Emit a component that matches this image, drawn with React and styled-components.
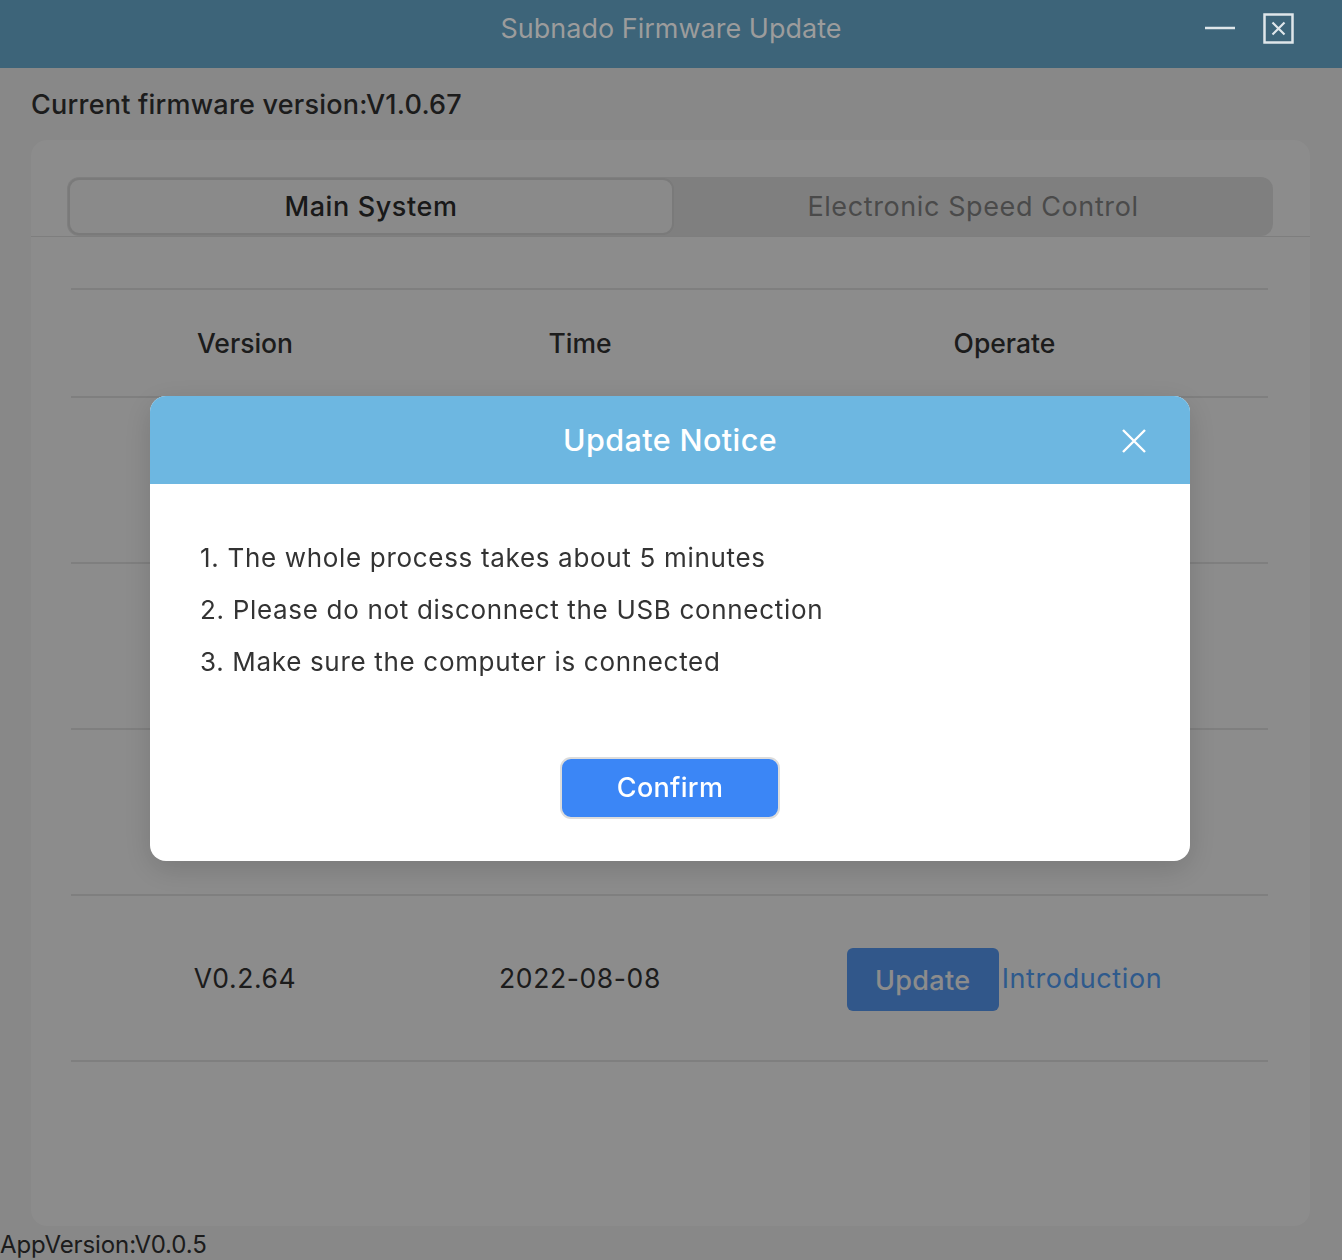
import React from "react";
import styled, { createGlobalStyle } from "styled-components";

const GlobalStyle = createGlobalStyle`
  html, body { margin: 0; padding: 0; }
  body {
    font-family: Inter, "Noto Sans", "Liberation Sans", sans-serif;
    background: #f7f7f7;
    color: #333;
  }
  * { box-sizing: border-box; }
`;

const Window = styled.div`
  width: 1342px;
  height: 1260px;
  background: #f7f7f7;
  display: flex;
  flex-direction: column;
  overflow: hidden;
`;

const TitleBar = styled.div`
  position: relative;
  z-index: 20;
  height: 68px;
  flex: none;
  background: #3d6479;
  display: flex;
  align-items: center;
  justify-content: center;
  padding-bottom: 12px;
`;

const TitleText = styled.div`
  font-size: 27px;
  color: #9c9c9c;
  letter-spacing: 0;
`;

const WinControls = styled.div`
  position: absolute;
  right: 48px;
  top: 13px;
  display: flex;
  align-items: center;
  gap: 28px;
`;

const Heading = styled.div`
  height: 72px;
  padding-left: 31px;
  display: flex;
  align-items: center;
  font-size: 27px;
  font-weight: 500;
  color: #333;
  letter-spacing: 0.22px;
`;

const Card = styled.div`
  margin: 0 32px 0 31px;
  height: 1086px;
  background: #fff;
  border-radius: 16px;
  display: flex;
  flex-direction: column;
`;

const TabHeader = styled.div`
  padding: 37px 37px 0 36px;
  border-bottom: 1px solid #e6e6e6;
`;

const TabList = styled.div`
  height: 59px;
  background: #e8e8e8;
  border-radius: 12px;
  display: flex;
  padding: 1px;
`;

const Tab = styled.div`
  flex: ${(p) => (p.$active ? "none" : "1")};
  width: ${(p) => (p.$active ? "606px" : "auto")};
  display: flex;
  align-items: center;
  justify-content: center;
  font-size: 27px;
  font-weight: ${(p) => (p.$active ? 500 : 400)};
  color: ${(p) => (p.$active ? "#2e2e2e" : "#888")};
  background: ${(p) => (p.$active ? "#fbfbfb" : "transparent")};
  border: 2px solid ${(p) => (p.$active ? "#dedede" : "transparent")};
  border-radius: 11px;
  letter-spacing: 0.6px;
`;

const Table = styled.div`
  margin: 51px 42px 0 40px;
  border-top: 2px solid #e8e8e8;
`;

const Row = styled.div`
  display: grid;
  grid-template-columns: 348px 322px 1fr;
  height: ${(p) => (p.$head ? 108 : 166)}px;
  border-bottom: 2px solid #e8e8e8;
  align-items: center;
`;

const Cell = styled.div`
  display: flex;
  justify-content: center;
  align-items: center;
  font-size: 26.5px;
  font-weight: ${(p) => (p.$head ? 500 : 400)};
  color: #333;
  letter-spacing: ${(p) => (p.$head ? "0" : "0.6px")};
`;

const UpdateButton = styled.button`
  width: 152px;
  height: 63px;
  margin-top: 3px;
  border: none;
  border-radius: 6px;
  background: #5a9efb;
  color: #fff;
  font-family: inherit;
  font-size: 27px;
  font-weight: 500;
  padding-top: 3px;
  letter-spacing: 0.3px;
`;

const IntroLink = styled.span`
  margin-left: 3px;
  color: #55a4ff;
  font-size: 27px;
`;

const Footer = styled.div`
  height: 34px;
  display: flex;
  align-items: flex-end;
  font-size: 24px;
  color: #333;
  letter-spacing: -0.1px;
  line-height: 30px;
`;

const Overlay = styled.div`
  position: fixed;
  inset: 0;
  z-index: 10;
  background: rgba(0, 0, 0, 0.45);
  display: flex;
  align-items: center;
  justify-content: center;
  padding: 0 2px 4px 0;
`;

const Modal = styled.div`
  width: 1040px;
  background: #fff;
  border-radius: 16px;
  overflow: hidden;
  box-shadow: 0 8px 30px rgba(0, 0, 0, 0.15);
`;

const ModalHeader = styled.div`
  position: relative;
  height: 88px;
  background: #6db7e1;
  display: flex;
  align-items: center;
  justify-content: center;
`;

const ModalTitle = styled.div`
  color: #fff;
  font-size: 30.5px;
  font-weight: 500;
  letter-spacing: 0.4px;
`;

const CloseButton = styled.div`
  position: absolute;
  right: 44px;
  top: 33px;
  width: 24px;
  height: 24px;
  display: flex;
`;

const ModalBody = styled.div`
  padding: 48px 50px 42px;
`;

const Notice = styled.div`
  font-size: 26px;
  line-height: 52px;
  color: #333;
  letter-spacing: 0.68px;
`;

const Actions = styled.div`
  margin-top: 69px;
  display: flex;
  justify-content: center;
`;

const ConfirmButton = styled.button`
  width: 220px;
  height: 62px;
  border: 2px solid #dcdcdc;
  border-radius: 11px;
  background: #3b86f6;
  color: #fff;
  font-family: inherit;
  font-size: 27px;
  font-weight: 500;
  letter-spacing: 0.3px;
`;

// Rows hidden behind the modal carry no visible content in the screenshot.
const rows = [
  { id: 1, hidden: true },
  { id: 2, hidden: true },
  { id: 3, hidden: true },
  { id: 4, v: "V0.2.64", t: "2022-08-08" },
];

export default function App() {
  return (
    <>
      <GlobalStyle />
      <Window>
        <TitleBar>
          <TitleText>Subnado Firmware Update</TitleText>
          <WinControls>
            <svg width="30" height="30" viewBox="0 0 30 30">
              <line x1="0" y1="14" x2="30" y2="14" stroke="#dfe6ea" strokeWidth="2.5" />
            </svg>
            <svg width="31" height="31" viewBox="0 0 31 31">
              <rect x="1.5" y="1.5" width="28" height="28" fill="none" stroke="#dfe6ea" strokeWidth="2.5" />
              <path d="M9.5 9.5 L21.5 21.5 M21.5 9.5 L9.5 21.5" stroke="#dfe6ea" strokeWidth="2.2" />
            </svg>
          </WinControls>
        </TitleBar>
        <Heading>Current firmware version:V1.0.67</Heading>
        <Card>
          <TabHeader>
            <TabList>
              <Tab $active>Main System</Tab>
              <Tab>Electronic Speed Control</Tab>
            </TabList>
          </TabHeader>
          <Table>
            <Row $head>
              <Cell $head>Version</Cell>
              <Cell $head>Time</Cell>
              <Cell $head>Operate</Cell>
            </Row>
            {rows.map((r) =>
              r.hidden ? (
                <Row key={r.id} />
              ) : (
                <Row key={r.id}>
                  <Cell>{r.v}</Cell>
                  <Cell>{r.t}</Cell>
                  <Cell>
                    <UpdateButton>Update</UpdateButton>
                    <IntroLink>Introduction</IntroLink>
                  </Cell>
                </Row>
              )
            )}
          </Table>
        </Card>
        <Footer>AppVersion:V0.0.5</Footer>
      </Window>
      <Overlay>
        <Modal>
          <ModalHeader>
            <ModalTitle>Update Notice</ModalTitle>
            <CloseButton>
              <svg width="24" height="24" viewBox="0 0 24 24">
                <path d="M1 1 L23 23 M23 1 L1 23" stroke="#fff" strokeWidth="2.4" />
              </svg>
            </CloseButton>
          </ModalHeader>
          <ModalBody>
            <Notice>1. The whole process takes about 5 minutes</Notice>
            <Notice>2. Please do not disconnect the USB connection</Notice>
            <Notice>3. Make sure the computer is connected</Notice>
            <Actions>
              <ConfirmButton>Confirm</ConfirmButton>
            </Actions>
          </ModalBody>
        </Modal>
      </Overlay>
    </>
  );
}
